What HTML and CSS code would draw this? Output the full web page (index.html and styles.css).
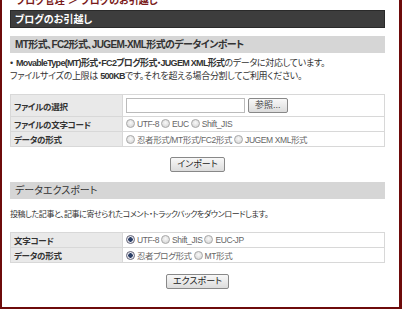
FILE: index.html
```html
<!DOCTYPE html>
<html lang="ja">
<head>
<meta charset="utf-8">
<link rel="stylesheet" href="styles.css">
</head>
<body>
<div class="frame">
  <div class="cut">ブログ管理 ＞ ブログのお引越し</div>
  <div class="page">
    <h1 class="head">ブログのお引越し</h1>

    <h2 class="sec sec-bold">MT形式、FC2形式、JUGEM-XML形式のデータインポート</h2>
    <p class="note">
      <span class="bullet">•</span> <b>MovableType(MT)形式・FC2ブログ形式・JUGEM XML形式</b>のデータに対応しています。<br>
      ファイルサイズの上限は <b>500KB</b>です。それを超える場合分割してご利用ください。
    </p>

    <table class="form first">
      <tr class="tall">
        <th>ファイルの選択</th>
        <td><span class="file"></span><span class="btn small">参照...</span></td>
      </tr>
      <tr>
        <th>ファイルの文字コード</th>
        <td><span class="radio"></span>UTF-8 <span class="radio"></span>EUC <span class="radio"></span>Shift_JIS</td>
      </tr>
      <tr>
        <th>データの形式</th>
        <td><span class="radio"></span>忍者形式/MT形式/FC2形式 <span class="radio"></span>JUGEM XML形式</td>
      </tr>
    </table>
    <div class="actions"><span class="btn">インポート</span></div>

    <h2 class="sec">データエクスポート</h2>
    <p class="desc">投稿した記事と、記事に寄せられたコメント・トラックバックをダウンロードします。</p>

    <table class="form second">
      <tr>
        <th>文字コード</th>
        <td><span class="radio on"></span>UTF-8 <span class="radio"></span>Shift_JIS <span class="radio"></span>EUC-JP</td>
      </tr>
      <tr>
        <th>データの形式</th>
        <td><span class="radio on"></span>忍者ブログ形式 <span class="radio"></span>MT形式</td>
      </tr>
    </table>
    <div class="actions last"><span class="btn">エクスポート</span></div>
  </div>
</div>
</body>
</html>
```

FILE: styles.css
```css
html, body {
  margin: 0;
  padding: 0;
  background: #fff;
}
body {
  font-family: "Liberation Sans", "Noto Sans CJK JP", sans-serif;
  font-size: 10px;
  color: #333;
  font-feature-settings: "palt";
}
.frame {
  width: 397px;
  height: 307px;
  border-left: 2px solid #6e0b0b;
  border-right: 3px solid #6e0b0b;
  border-bottom: 2px solid #6e0b0b;
  overflow: hidden;
  box-sizing: content-box;
}
.cut {
  height: 5px;
  overflow: hidden;
  margin-left: 14px;
  color: #7a1a1a;
  font-weight: bold;
  font-size: 10px;
  line-height: 2px;
}
.page {
  padding: 5px 14px 0 8px;
}
.head {
  margin: 0;
  height: 18px;
  line-height: 18px;
  background: #3d3d3d;
  border: 1px solid #2a2a2a;
  box-sizing: border-box;
  color: #fff;
  font-size: 10px;
  font-weight: bold;
  padding-left: 4px;
}
.sec {
  margin: 8px 0 0;
  height: 17px;
  line-height: 17px;
  background: #d6d6d6;
  color: #333;
  font-size: 10px;
  font-weight: normal;
  padding-left: 5px;
}
.sec-bold {
  font-weight: bold;
  font-size: 10px;
  letter-spacing: -0.6px;
}
.note {
  margin: 4px 0 0;
  line-height: 13px;
  font-size: 9px;
  letter-spacing: -0.3px;
}
.note b {
  color: #333;
  letter-spacing: -0.7px;
}
.bullet { font-size: 9px; margin-right: 1px; }
.form {
  width: 100%;
  border-collapse: collapse;
  font-size: 8.5px;
  letter-spacing: -0.2px;
}
.form.first { margin-top: 11px; }
.form.second { margin-top: 11px; }
.form th, .form td {
  border: 1px solid #d8d8d8;
  height: 14px;
  padding: 0 3px;
  text-align: left;
  white-space: nowrap;
}
.form th {
  width: 105px;
  background: #e9e9e9;
  font-weight: bold;
  color: #333;
  padding-left: 3px;
  letter-spacing: -0.3px;
}
.form td {
  color: #666;
  letter-spacing: -0.4px;
}
.form tr.tall th, .form tr.tall td { height: 21px; }
.file {
  display: inline-block;
  vertical-align: middle;
  width: 117px;
  height: 13px;
  border: 1px solid #bbb;
  background: #fff;
  margin-right: 3px;
}
.btn {
  display: inline-block;
  vertical-align: middle;
  height: 13px;
  line-height: 13px;
  padding: 0 6px;
  border: 1px solid #888;
  border-radius: 2px;
  background: linear-gradient(#f8f8f8, #dcdcdc);
  color: #222;
  font-size: 9px;
  letter-spacing: 0;
}
.btn.small { padding: 0 6px; color: #444; }
.radio {
  display: inline-block;
  width: 7px;
  height: 7px;
  border-radius: 50%;
  border: 1px solid #aaa;
  background: radial-gradient(circle at 50% 40%, #fafafa, #cfcfcf);
  vertical-align: -1px;
  margin: 0 2px 0 0;
}
.radio.on {
  border-color: #667;
  background: radial-gradient(circle, #2b3f66 0 2px, #e6e6ee 2.5px);
}
.actions {
  display: flex;
  justify-content: center;
  margin-top: 10px;
}
.actions + .sec { margin-top: 10px; }
.actions.last { margin-top: 11px; }
.desc {
  margin: 9px 0 0;
  line-height: 13px;
  font-size: 8px;
  letter-spacing: -0.4px;
}
```
